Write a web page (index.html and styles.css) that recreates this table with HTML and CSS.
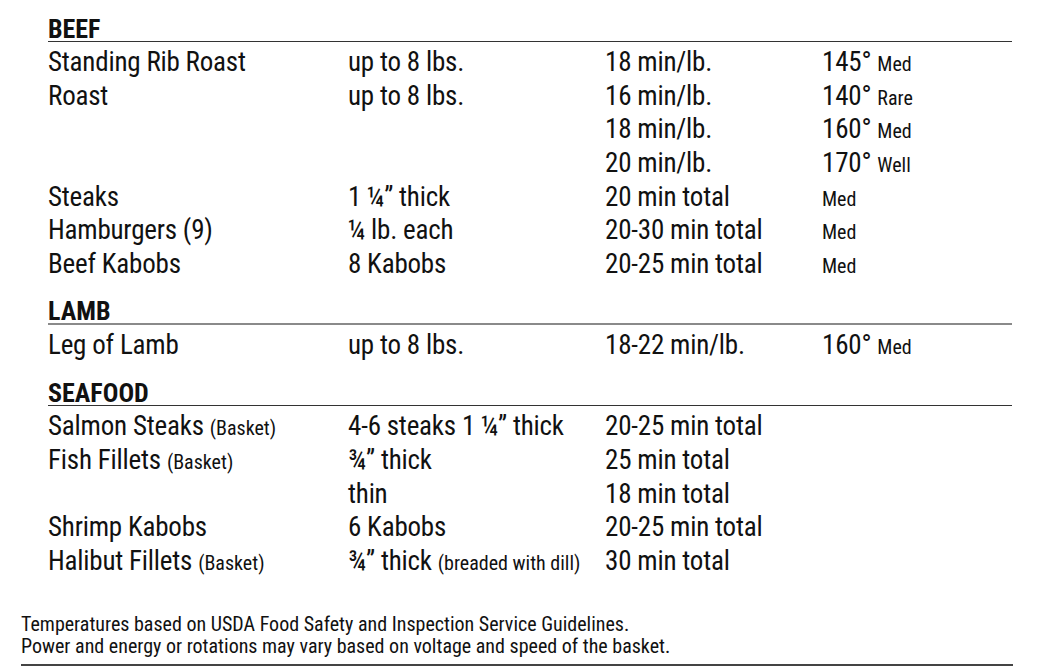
FILE: index.html
```html
<!DOCTYPE html>
<html lang="en">
<head>
<meta charset="utf-8">
<title>Rotisserie Cooking Chart</title>
<link rel="stylesheet" href="styles.css">
</head>
<body>
<main class="chart">
  <section class="group">
    <h2 class="group-title">BEEF</h2>
    <div class="rows">
      <div class="row"><span>Standing Rib Roast</span><span>up to 8 lbs.</span><span>18 min/lb.</span><span>145° <small>Med</small></span></div>
      <div class="row"><span>Roast</span><span>up to 8 lbs.</span><span>16 min/lb.</span><span>140° <small>Rare</small></span></div>
      <div class="row"><span></span><span></span><span>18 min/lb.</span><span>160° <small>Med</small></span></div>
      <div class="row"><span></span><span></span><span>20 min/lb.</span><span>170° <small>Well</small></span></div>
      <div class="row"><span>Steaks</span><span>1 ¼” thick</span><span>20 min total</span><span><small>Med</small></span></div>
      <div class="row"><span>Hamburgers (9)</span><span>¼ lb. each</span><span>20-30 min total</span><span><small>Med</small></span></div>
      <div class="row"><span>Beef Kabobs</span><span>8 Kabobs</span><span>20-25 min total</span><span><small>Med</small></span></div>
    </div>
  </section>
  <section class="group">
    <h2 class="group-title light">LAMB</h2>
    <div class="rows">
      <div class="row"><span>Leg of Lamb</span><span>up to 8 lbs.</span><span>18-22 min/lb.</span><span>160° <small>Med</small></span></div>
    </div>
  </section>
  <section class="group">
    <h2 class="group-title">SEAFOOD</h2>
    <div class="rows">
      <div class="row"><span>Salmon Steaks <small>(Basket)</small></span><span>4-6 steaks 1 ¼” thick</span><span>20-25 min total</span><span></span></div>
      <div class="row"><span>Fish Fillets <small>(Basket)</small></span><span>¾” thick</span><span>25 min total</span><span></span></div>
      <div class="row"><span></span><span>thin</span><span>18 min total</span><span></span></div>
      <div class="row"><span>Shrimp Kabobs</span><span>6 Kabobs</span><span>20-25 min total</span><span></span></div>
      <div class="row"><span>Halibut Fillets <small>(Basket)</small></span><span>¾” thick <small>(breaded with dill)</small></span><span>30 min total</span><span></span></div>
    </div>
  </section>
</main>
<footer class="notes">
  <p>Temperatures based on USDA Food Safety and Inspection Service Guidelines.</p>
  <p>Power and energy or rotations may vary based on voltage and speed of the basket.</p>
</footer>
</body>
</html>
```

FILE: styles.css
```css
html, body {
  margin: 0;
  padding: 0;
  background: #ffffff;
}

body {
  font-family: Roboto, "Liberation Sans", Arial, sans-serif;
  font-stretch: 75%;
  color: #111111;
  width: 1057px;
  height: 666px;
  overflow: hidden;
}

.chart {
  padding: 13px 45px 0 48px;
}

.group + .group {
  margin-top: 14.5px;
}

.group-title {
  margin: 0;
  padding-top: 4px;
  font-size: 26px;
  line-height: 24px;
  font-weight: 700;
  border-bottom: 1px solid #333333;
}

.group-title.light {
  border-bottom: 2px solid #8a8a8a;
  line-height: 23px;
}

.rows {
  margin-top: 4px;
}

.row {
  display: grid;
  grid-template-columns: 300px 257px 217px 1fr;
  font-size: 27px;
  letter-spacing: -0.2px;
  line-height: 33.67px;
  height: 33.67px;
  white-space: nowrap;
}

.row small {
  font-size: 20px;
  letter-spacing: 0;
  line-height: 1;
}

.notes {
  margin: 34px 44px 0 21px;
  padding-bottom: 7px;
  border-bottom: 2px solid #444444;
  font-size: 20px;
  line-height: 22px;
}

.notes p {
  margin: 0;
}
```
